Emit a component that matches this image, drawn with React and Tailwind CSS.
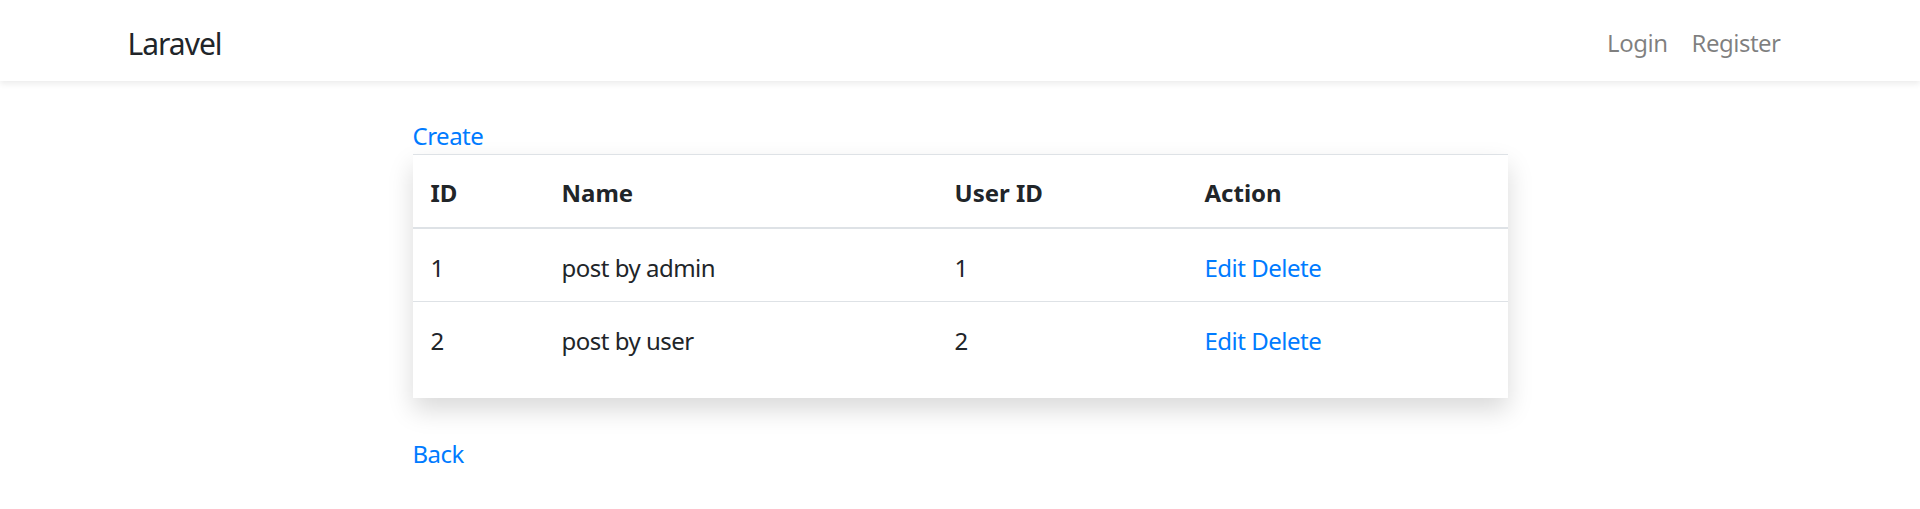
const posts = [
  { id: 1, name: 'post by admin', userId: 1 },
  { id: 2, name: 'post by user', userId: 2 },
]

function Navbar() {
  return (
    <nav className="h-[81px] bg-white shadow-[0_3px_6px_rgba(0,0,0,0.075)] relative">
      <div className="mx-auto flex h-full w-[1710px] items-center justify-between px-[22.5px] pt-[5px]">
        <a href="#" className="text-[30px] leading-[45px] tracking-[-1px] text-[#212529]">Laravel</a>
        <div className="flex items-center">
          <a href="#" className="px-[12px] text-[24px] leading-[36px] tracking-[-0.5px] text-black/50">Login</a>
          <a href="#" className="px-[12px] text-[24px] leading-[36px] tracking-[-0.5px] text-black/50">Register</a>
        </div>
      </div>
    </nav>
  )
}

export default function App() {
  return (
    <div className="min-h-screen bg-white font-['Noto_Sans',sans-serif] text-[24px] leading-[36px] tracking-[-0.5px] text-[#212529]">
      <Navbar />

      <main className="pt-[34.5px]">
        <div className="mx-auto w-[1095px]">
          <a href="#" className="block w-fit pt-[2.5px] text-[#007bff]">Create</a>

          <div className="bg-white pb-[24px] shadow-[0_12px_24px_rgba(0,0,0,0.15)]">
            <table className="w-full table-fixed">
              <thead>
                <tr>
                  <th className="w-[131px] border-t border-b-2 border-[#dee2e6] px-[18px] pt-[19.5px] pb-[16.5px] text-left font-bold tracking-normal">ID</th>
                  <th className="w-[393px] border-t border-b-2 border-[#dee2e6] px-[18px] pt-[19.5px] pb-[16.5px] text-left font-bold tracking-normal">Name</th>
                  <th className="w-[250px] border-t border-b-2 border-[#dee2e6] px-[18px] pt-[19.5px] pb-[16.5px] text-left font-bold tracking-normal">User ID</th>
                  <th className="border-t border-b-2 border-[#dee2e6] px-[18px] pt-[19.5px] pb-[16.5px] text-left font-bold tracking-normal">Action</th>
                </tr>
              </thead>
              <tbody>
                {posts.map(p => (
                  <tr key={p.id}>
                    <td className="border-t border-[#dee2e6] px-[18px] pt-[21px] pb-[15px]">{p.id}</td>
                    <td className="border-t border-[#dee2e6] px-[18px] pt-[21px] pb-[15px]">{p.name}</td>
                    <td className="border-t border-[#dee2e6] px-[18px] pt-[21px] pb-[15px]">{p.userId}</td>
                    <td className="border-t border-[#dee2e6] px-[18px] pt-[21px] pb-[15px]">
                      <a href="#" className="text-[#007bff]">Edit</a>{' '}
                      <a href="#" className="text-[#007bff]">Delete</a>
                    </td>
                  </tr>
                ))}
              </tbody>
            </table>
          </div>

          <a href="#" className="mt-[38px] block w-fit text-[#007bff]">Back</a>
        </div>
      </main>
    </div>
  )
}
